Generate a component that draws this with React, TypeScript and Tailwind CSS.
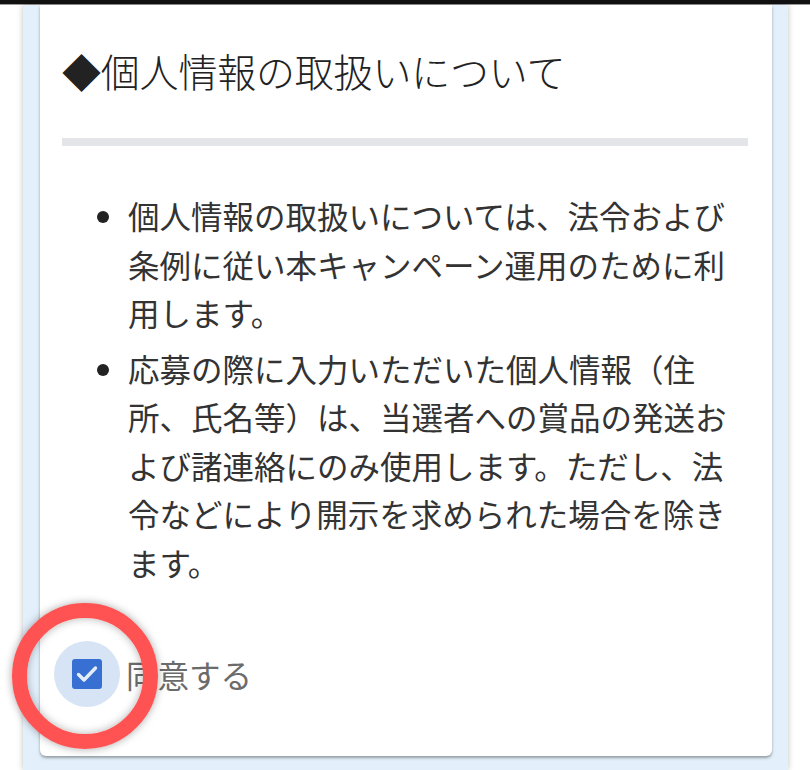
import React from 'react';

const jp = { fontFamily: '"Noto Sans CJK JP", "Noto Sans", sans-serif' };

const App: React.FC = () => {
  return (
    <div className="relative h-[770px] w-[810px] overflow-hidden bg-white" style={jp}>
      {/* status bar edge */}
      <div className="h-[5px] bg-[#111] border-b border-[#9a9a9a]" />

      {/* frame */}
      <div className="ml-[23px] w-[765px] h-[765px] bg-[#e3f0fb] pl-[17px] pr-[16px] shadow-[0_0_6px_rgba(0,0,0,0.25)]">
        <div className="bg-white rounded-b-[6px] pl-[22px] pr-[24px] pt-[36px] pb-[49px] shadow-[0_2px_3px_rgba(0,0,0,0.35)]">
          <h2 className="text-[39px] leading-[58px] font-light text-[#222] tracking-[-0.2px]">
            ◆個人情報の取扱いについて
          </h2>

          <div className="mt-[39px] h-[8px] bg-[#e4e5e9]" />

          <ul className="mt-[45px] pl-[66px] list-disc text-[31.5px] leading-[48.5px] text-[#333] marker:text-[#222]">
            <li>個人情報の取扱いについては、法令および条例に従い本キャンペーン運用のために利用します。</li>
            <li className="mt-[7px]">
              応募の際に入力いただいた個人情報（住所、氏名等）は、当選者への賞品の発送および諸連絡にのみ使用します。ただし、法令などにより開示を求められた場合を除きます。
            </li>
          </ul>

          <label className="mt-[55px] flex items-center">
            <span className="flex h-[66px] w-[66px] items-center justify-center rounded-full bg-[#d6e4f5] -ml-[8px]">
              <span className="flex h-[30px] w-[30px] items-center justify-center rounded-[3px] bg-[#3770d2]">
                <svg viewBox="0 0 30 30" width="30" height="30" fill="none" stroke="#e4edfa" strokeWidth="3.4" strokeLinecap="round" strokeLinejoin="round">
                  <path d="M6.5 15.5l5.5 5.5L23.5 9" />
                </svg>
              </span>
            </span>
            <span className="ml-[6px] text-[31.5px] leading-[48px] text-[#6b6b6b]">同意する</span>
          </label>
        </div>
      </div>

      {/* annotation ring */}
      <div className="absolute left-[12px] top-[603px] h-[146px] w-[146px] rounded-full border-[15px] border-[#ff5252] shadow-[0_0_8px_rgba(0,0,0,0.35),inset_0_0_8px_rgba(0,0,0,0.3)]" />
    </div>
  );
};

export default App;
